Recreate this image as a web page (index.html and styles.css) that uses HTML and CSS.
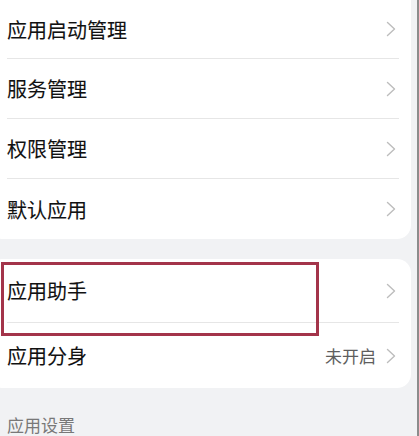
FILE: index.html
```html
<!DOCTYPE html>
<html lang="zh-CN">
<head>
    <meta charset="UTF-8">
    <meta name="viewport" content="width=device-width, initial-scale=1.0">
    <title>应用</title>
    <link rel="stylesheet" href="styles.css">
</head>
<body>
    <div class="page">
        <!-- First group -->
        <div class="card card-top">
            <div class="row row-a">
                <span class="label">应用启动管理</span>
                <svg class="chevron" viewBox="0 0 10 16"><path d="M1.5 1.5 L8.5 8 L1.5 14.5"/></svg>
            </div>
            <div class="row row-a">
                <span class="label">服务管理</span>
                <svg class="chevron" viewBox="0 0 10 16"><path d="M1.5 1.5 L8.5 8 L1.5 14.5"/></svg>
            </div>
            <div class="row row-a">
                <span class="label">权限管理</span>
                <svg class="chevron" viewBox="0 0 10 16"><path d="M1.5 1.5 L8.5 8 L1.5 14.5"/></svg>
            </div>
            <div class="row row-a last">
                <span class="label">默认应用</span>
                <svg class="chevron" viewBox="0 0 10 16"><path d="M1.5 1.5 L8.5 8 L1.5 14.5"/></svg>
            </div>
        </div>

        <!-- Second group -->
        <div class="card card-bottom">
            <div class="row row-b">
                <span class="label">应用助手</span>
                <svg class="chevron" viewBox="0 0 10 16"><path d="M1.5 1.5 L8.5 8 L1.5 14.5"/></svg>
            </div>
            <div class="row row-b last">
                <span class="label">应用分身</span>
                <span class="value">未开启</span>
                <svg class="chevron" viewBox="0 0 10 16"><path d="M1.5 1.5 L8.5 8 L1.5 14.5"/></svg>
            </div>
            <!-- Highlight box drawn over the first row -->
            <div class="highlight"></div>
        </div>

        <div class="section-title">应用设置</div>
    </div>
</body>
</html>
```

FILE: styles.css
```css
html, body {
    margin: 0;
    padding: 0;
}
body {
    width: 419px;
    height: 436px;
    overflow: hidden;
    background-color: #f1f2f4;
    font-family: "Noto Sans CJK SC", "Noto Sans", sans-serif;
}
.page {
    height: 436px;
    padding-right: 6px;
    border-right: 2px solid #8c8c8c;
    box-sizing: border-box;
    overflow: hidden;
}
.card {
    position: relative;
    background-color: #ffffff;
    margin-left: -12px;
    padding-left: 19px;
    padding-right: 12px;
    border-radius: 14px;
}
.card-top {
    border-top-left-radius: 0;
    border-top-right-radius: 0;
}
.card-bottom {
    margin-top: 20px;
}
.row {
    display: flex;
    align-items: center;
    border-bottom: 1px solid #e6e6e6;
    box-sizing: border-box;
}
.row.last {
    border-bottom: none;
}
.row-a {
    height: 60px;
}
.card-top .row-a:first-child {
    height: 59px;
}
.row-b {
    height: 64px;
}
.row-b.last {
    height: 65px;
}
.label {
    flex: 1;
    font-size: 20px;
    color: #111111;
    -webkit-text-stroke: 0.1px #111111;
    line-height: 1;
    padding-top: 1px;
}
.value {
    font-size: 17px;
    color: #5e5e5e;
    margin-right: 10px;
    line-height: 1;
}
.chevron {
    width: 10px;
    height: 16px;
    margin-right: 3px;
}
.chevron path {
    fill: none;
    stroke: #bdbdbd;
    stroke-width: 1.4;
    stroke-linecap: round;
    stroke-linejoin: round;
}
.highlight {
    position: absolute;
    left: 13px;
    top: 3px;
    width: 312px;
    height: 68px;
    border: 3px solid #a3344a;
}
.section-title {
    margin-top: 28px;
    padding-left: 7px;
    font-size: 17px;
    color: #787878;
    line-height: 1;
}
```
